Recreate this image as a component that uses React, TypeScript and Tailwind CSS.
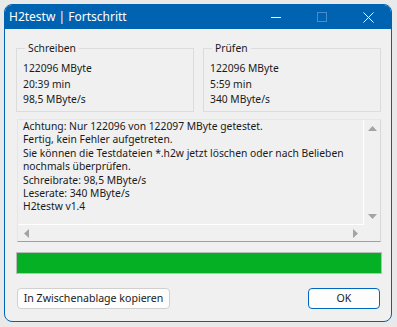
export default function App() {
  const font = { fontFamily: '"Noto Sans", "Liberation Sans", sans-serif' }

  return (
    <div
      className="w-[397px] h-[327px] bg-[#e9e9e9] p-[4px] text-[10.3px] text-[#1a1a1a]"
      style={font}
    >
      <div className="w-[388px] h-[318px] border border-[#0063b1] rounded-[8px] overflow-hidden bg-[#f0f0f0] flex flex-col">
        {/* title bar */}
        <div className="h-[24px] bg-[#0063b1] flex items-center text-white text-[12px] pl-[4px] shrink-0">
          <span className="flex-1 leading-[24px]">H2testw | Fortschritt</span>
          <div className="flex items-center h-full">
            <div className="w-[46px] h-full flex items-center justify-center">
              <div className="w-[10px] h-px bg-white" />
            </div>
            <div className="w-[46px] h-full flex items-center justify-center">
              <div className="w-[10px] h-[10px] border border-[#4a8ccc]" />
            </div>
            <div className="w-[46px] h-full flex items-center justify-center">
              <svg width="11" height="11" viewBox="0 0 11 11">
                <path d="M0.5 0.5 L10.5 10.5 M10.5 0.5 L0.5 10.5" stroke="white" strokeWidth="1" />
              </svg>
            </div>
          </div>
        </div>

        {/* body */}
        <div className="flex-1 pl-[11px] pr-[10px] pt-[12px] flex flex-col">
          <div className="flex gap-[9px]">
            {[
              { title: 'Schreiben', lines: ['122096 MByte', '20:39 min', '98,5 MByte/s'] },
              { title: 'Prüfen', lines: ['122096 MByte', '5:59 min', '340 MByte/s'] },
            ].map((g) => (
              <fieldset
                key={g.title}
                className="w-[178px] h-[71px] border border-[#dcdcdc] px-[6px] pb-[5px]"
              >
                <legend className="ml-[2px] px-[3px] leading-[15px]">{g.title}</legend>
                <div className="pt-[5px] leading-[15.5px]">
                  {g.lines.map((l) => (
                    <div key={l}>{l}</div>
                  ))}
                </div>
              </fieldset>
            ))}
          </div>

          {/* log box */}
          <div className="mt-[7px] ml-[1px] w-[364px] h-[123px] border-t border-l border-[#e6e6e6] border-r border-r-[#d8d8d8] border-b border-b-[#a0a0a0] grid grid-cols-[346px_17px] grid-rows-[105px_17px]">
            <div className="border-r border-b border-white pl-[5px] pt-[0px] leading-[13.4px] whitespace-nowrap overflow-hidden">
              <div>Achtung: Nur 122096 von 122097 MByte getestet.</div>
              <div>Fertig, kein Fehler aufgetreten.</div>
              <div>Sie können die Testdateien *.h2w jetzt löschen oder nach Belieben</div>
              <div>nochmals überprüfen.</div>
              <div>Schreibrate: 98,5 MByte/s</div>
              <div>Leserate: 340 MByte/s</div>
              <div>H2testw v1.4</div>
            </div>
            <div className="flex flex-col items-center justify-between py-[6px]">
              <svg width="9" height="5" viewBox="0 0 9 5">
                <path d="M4.5 0 L9 5 L0 5 Z" fill="#a3a3a3" />
              </svg>
              <svg width="9" height="5" viewBox="0 0 9 5">
                <path d="M0 0 L9 0 L4.5 5 Z" fill="#a3a3a3" />
              </svg>
            </div>
            <div className="flex items-center justify-between px-[6px]">
              <svg width="5" height="9" viewBox="0 0 5 9">
                <path d="M5 0 L5 9 L0 4.5 Z" fill="#a3a3a3" />
              </svg>
              <svg width="5" height="9" viewBox="0 0 5 9">
                <path d="M0 0 L5 4.5 L0 9 Z" fill="#a3a3a3" />
              </svg>
            </div>
            <div />
          </div>

          {/* progress */}
          <div className="mt-[10px] w-[366px] h-[22px] border border-[#bcbcbc] bg-[#e6e6e6]">
            <div className="h-full w-full bg-[#06b025]" />
          </div>

          {/* buttons */}
          <div className="mt-[14px] flex justify-between ml-[1px] mr-[1px]">
            <button className="w-[153px] h-[21px] rounded-[4px] border border-[#d0d0d0] bg-[#fdfdfd] leading-[19px] whitespace-nowrap text-[10.6px]">
              In Zwischenablage kopieren
            </button>
            <button className="w-[72px] h-[21px] rounded-[4px] border border-[#0067c0] bg-[#fdfdfd] leading-[19px] text-[10.6px]">
              OK
            </button>
          </div>
        </div>
      </div>
    </div>
  )
}
